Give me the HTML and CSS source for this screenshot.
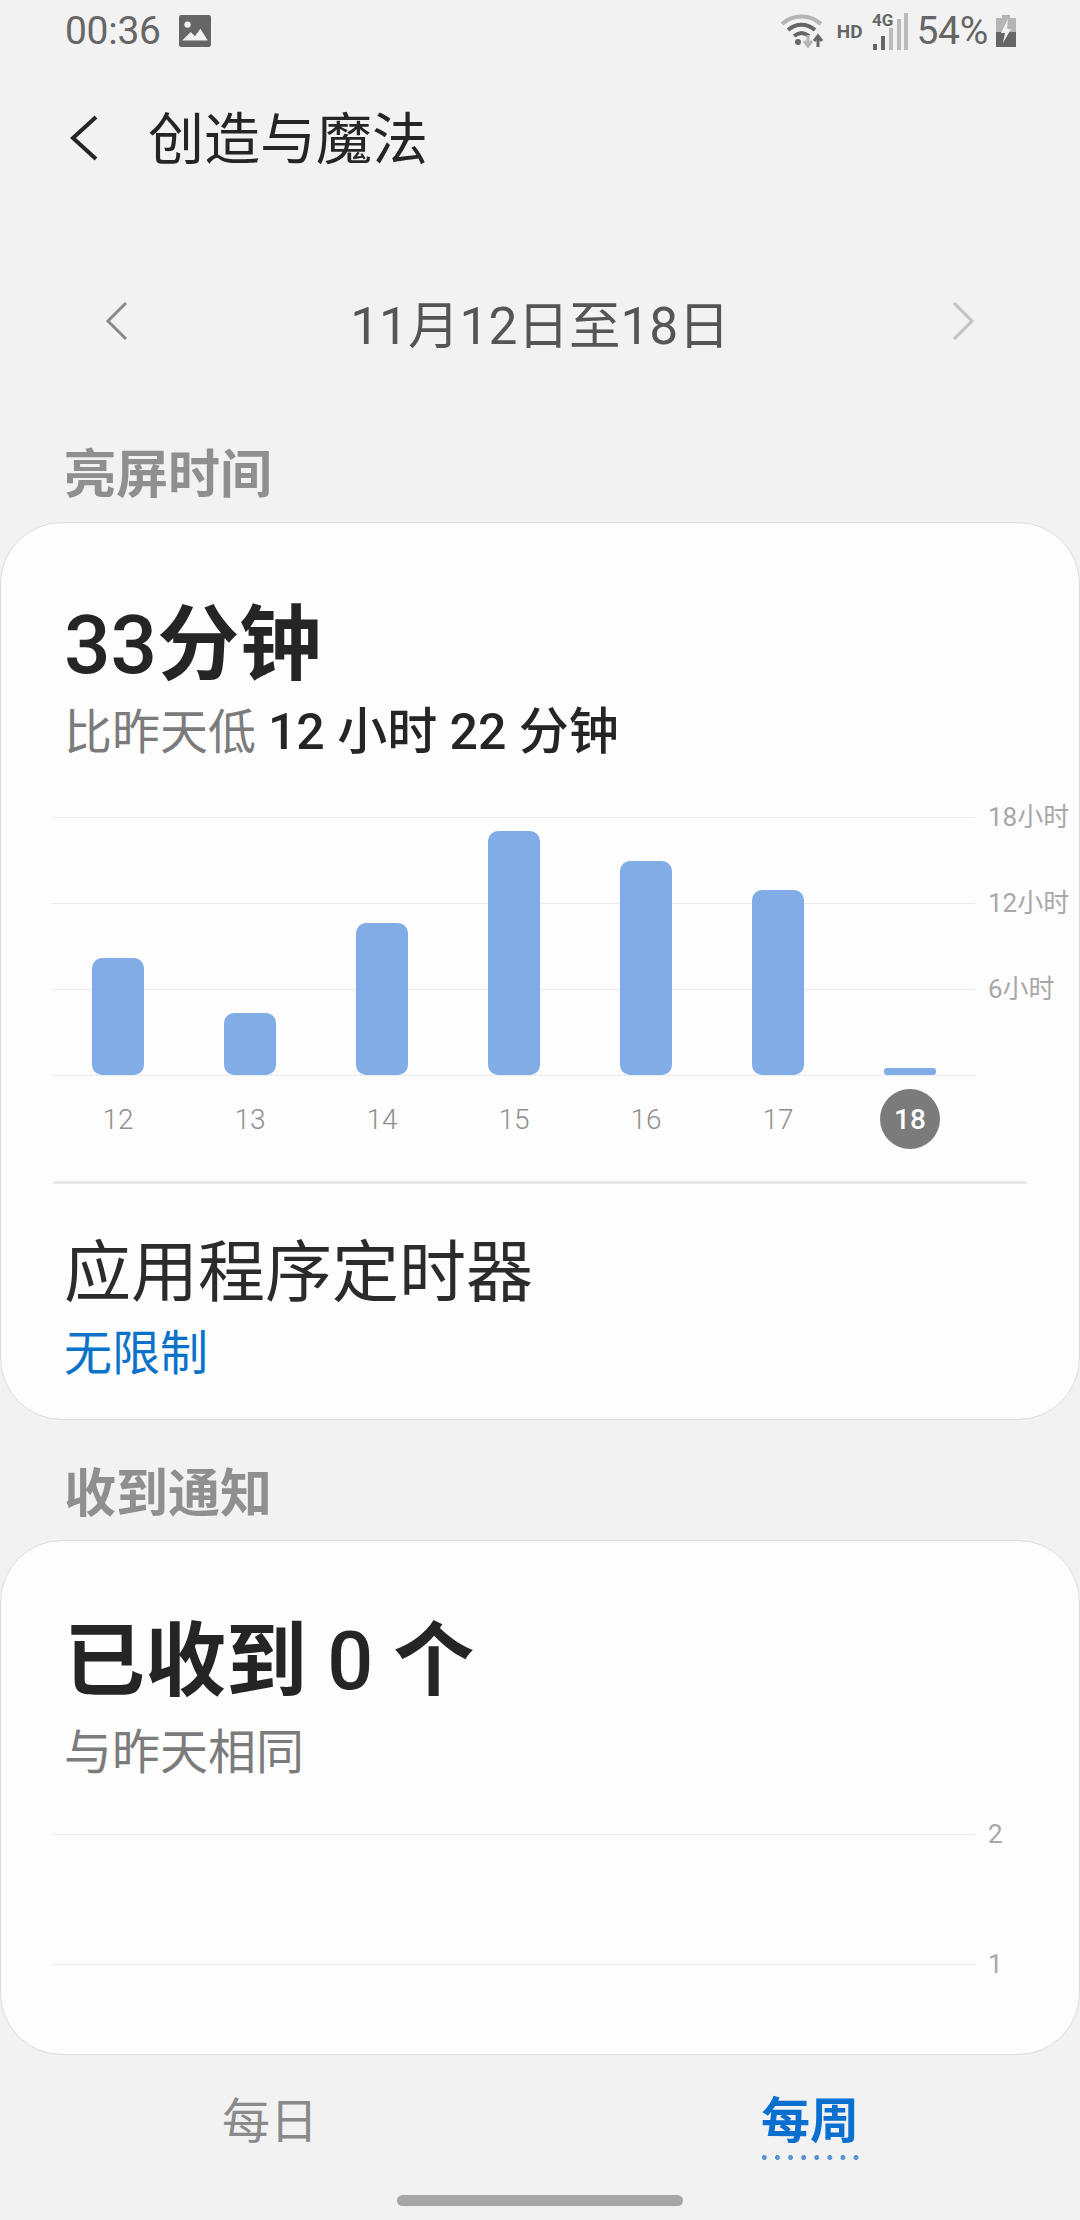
FILE: index.html
```html
<!DOCTYPE html>
<html lang="zh">
<head>
<meta charset="utf-8">
<title>创造与魔法</title>
<link rel="stylesheet" href="styles.css">
</head>
<body>
<div class="status">
  <div class="status-left">
    <span class="clock">00:36</span>
    <svg class="pic" viewBox="0 0 30 30"><path fill="#666" d="M0 2a2 2 0 0 1 2-2h26a2 2 0 0 1 2 2v26a2 2 0 0 1-2 2H2a2 2 0 0 1-2-2z"/><circle cx="8" cy="9" r="3" fill="#f2f2f2"/><path fill="#f2f2f2" d="M3 24l8-8 4 4 5-7 7 11z"/></svg>
  </div>
  <div class="status-right">
    <svg class="wifi" viewBox="0 0 44 36" fill="none"><path d="M2 11C13 1 30 1 41 11" stroke="#b5b5b5" stroke-width="4"/><path d="M8 17c8-7 19-7 27 0" stroke="#666" stroke-width="4"/><path d="M14 23c5-4 10-4 15 0" stroke="#666" stroke-width="4"/><circle cx="18" cy="29" r="3" fill="#666"/><path d="M28 22v10m-4-4 4 5 4-5" stroke="#b5b5b5" stroke-width="3"/><path d="M38 34V24m-4 4 4-5 4 5" stroke="#666" stroke-width="3"/></svg>
    <span class="hd">HD</span>
    <svg class="signal" viewBox="0 0 36 40"><text x="0" y="15" class="sig-text">4G</text><rect x="1" y="33" width="4" height="6" fill="#666"/><rect x="9" y="25" width="4" height="14" fill="#666"/><rect x="17" y="17" width="4" height="22" fill="#bbb"/><rect x="25" y="8" width="4" height="31" fill="#bbb"/><rect x="32" y="2" width="4" height="37" fill="#bbb"/></svg>
    <span class="pct">54%</span>
    <svg class="batt" viewBox="0 0 22 32"><path fill="#b5b5b5" d="M7 0h8v3h6v14H1V3h6z"/><path fill="#666" d="M1 17h20v15H1z"/><path fill="#f2f2f2" d="M13 4 6 18h4l-2 10 8-14h-4z"/></svg>
  </div>
</div>

<header class="header">
  <svg class="back" viewBox="0 0 32 48" fill="none"><path d="M28 3 5 24l23 21" stroke="#252525" stroke-width="4"/></svg>
  <h1 class="title">创造与魔法</h1>
</header>

<div class="date-row">
  <svg class="chev" viewBox="0 0 24 40" fill="none"><path d="M21 2 3 20l18 18" stroke="#8a8a8a" stroke-width="3"/></svg>
  <span class="date">11月12日至18日</span>
  <svg class="chev" viewBox="0 0 24 40" fill="none"><path d="M3 2l18 18L3 38" stroke="#c2c2c2" stroke-width="3"/></svg>
</div>

<h2 class="section section-first">亮屏时间</h2>
<section class="card card-screen">
  <div class="big big-time"><span class="num">33</span>分钟</div>
  <div class="sub">比昨天低 <b>12 小时 22 分钟</b></div>
  <div class="chart">
    <div class="grid-row"><i class="line"></i><span class="axis">18小时</span></div>
    <div class="grid-row"><i class="line"></i><span class="axis">12小时</span></div>
    <div class="grid-row"><i class="line"></i><span class="axis">6小时</span></div>
    <div class="grid-row"><i class="line"></i></div>
    <div class="bars">
      <i class="bar" style="height:117px"></i>
      <i class="bar" style="height:62px"></i>
      <i class="bar" style="height:152px"></i>
      <i class="bar" style="height:244px"></i>
      <i class="bar" style="height:214px"></i>
      <i class="bar" style="height:185px"></i>
      <i class="bar bar-min" style="height:7px"></i>
    </div>
  </div>
  <div class="days">
    <span>12</span><span>13</span><span>14</span><span>15</span><span>16</span><span>17</span><span class="today">18</span>
  </div>
  <div class="divider"></div>
  <div class="timer-title">应用程序定时器</div>
  <div class="timer-value">无限制</div>
</section>

<h2 class="section section-second">收到通知</h2>
<section class="card card-notif">
  <div class="big big-notif">已收到 <span class="num">0</span> 个</div>
  <div class="sub">与昨天相同</div>
  <div class="chart chart-notif">
    <div class="grid-row grid-row-tall"><i class="line"></i><span class="axis">2</span></div>
    <div class="grid-row grid-row-tall"><i class="line"></i><span class="axis">1</span></div>
  </div>
</section>

<nav class="tabs">
  <div class="tab">每日</div>
  <div class="tab tab-active">每周</div>
</nav>
<div class="home-wrap"><div class="home"></div></div>
</body>
</html>
```
FILE: styles.css
```css
* { box-sizing: border-box; }
html, body { margin: 0; padding: 0; }
body {
  width: 1080px;
  height: 2220px;
  overflow: hidden;
  background: #f2f2f2;
  color: #252525;
  font-family: Roboto, "Noto Sans CJK SC", sans-serif;
}
h1, h2 { margin: 0; font: inherit; }

.status {
  height: 60px;
  padding: 2px 63px 0 65px;
  display: flex;
  align-items: center;
  justify-content: space-between;
  color: #666;
}
.status-left { display: flex; align-items: center; gap: 18px; }
.clock { font-size: 39px; font-weight: 400; letter-spacing: -0.3px; }
.pic { width: 32px; height: 32px; }
.status-right { display: flex; align-items: center; }
.wifi { width: 44px; height: 36px; margin-right: 13px; }
.hd { font-size: 19px; font-weight: 700; margin-right: 10px; }
.signal { width: 36px; height: 40px; margin-right: 8px; }
.sig-text { font: 700 17px Roboto, sans-serif; fill: #666; }
.pct { font-size: 39px; font-weight: 400; letter-spacing: -0.3px; margin-right: 7px; }
.batt { width: 22px; height: 32px; }

.header {
  height: 156px;
  padding-left: 68px;
  display: flex;
  align-items: center;
}
.back { width: 32px; height: 48px; }
.title { margin: 4px 0 0 48px; font-size: 56px; font-weight: 400; line-height: 1; }

.date-row {
  height: 216px;
  padding: 0 105px 6px;
  display: flex;
  align-items: center;
  justify-content: space-between;
}
.chev { width: 24px; height: 40px; }
.date { font-size: 51.5px; color: #555; }

.section {
  padding-left: 64px;
  display: flex;
  align-items: center;
  font-size: 52px;
  font-weight: 700;
  color: #8f8f8f;
}
.section-first { height: 90px; padding-bottom: 14px; }
.section-second { height: 120px; padding-top: 18px; }

.card {
  background: #fdfdfd;
  border: 1px solid #dcdcdc;
  border-radius: 62px;
  overflow: hidden;
}
.card-screen { height: 898px; }
.card-notif { height: 515px; }

.big { margin-left: 63px; font-weight: 700; line-height: 1; }
.num { font-weight: 500; }
.big-time { font-size: 82px; padding-top: 81px; height: 183px; }
.big-notif { font-size: 81px; padding-top: 80px; height: 186px; }
.sub { margin-left: 63px; height: 52px; font-size: 48px; line-height: 52px; color: #7b7b7b; }
.sub b { color: #252525; font-weight: 500; font-size: 50px; }

.chart { position: relative; margin: 16px 0 0 51px; width: 1028px; }
.grid-row { height: 86px; display: flex; align-items: center; }
.line { display: block; width: 923px; height: 1px; background: #ececec; }
.axis { margin-left: 13px; font-size: 26px; color: #a8a8a8; line-height: 1; }
.bars {
  position: absolute;
  left: 40px;
  bottom: 43px;
  display: flex;
  align-items: flex-end;
  gap: 80px;
}
.bar { display: block; width: 52px; background: #82ace6; border-radius: 10px; }
.bar-min { border-radius: 3px; }

.days {
  margin: -29px 0 0 51px;
  width: 924px;
  height: 60px;
  display: grid;
  grid-template-columns: repeat(7, 132px);
  align-items: center;
  justify-items: center;
  font-size: 28px;
  font-weight: 300;
  color: #8f8f8f;
}
.today {
  width: 60px;
  height: 60px;
  border-radius: 50%;
  background: #7b7b7b;
  color: #fff;
  font-weight: 500;
  display: flex;
  align-items: center;
  justify-content: center;
}
.divider { margin: 32px 0 0 52px; width: 974px; height: 3px; background: #e8e8e8; }
.timer-title { margin: 44px 0 0 63px; font-size: 67px; line-height: 90px; color: #2b2b2b; }
.timer-value { margin: 3px 0 0 63px; font-size: 48px; line-height: 66px; color: #0b72c9; }

.chart-notif { margin-top: -10px; }
.grid-row-tall { height: 130px; }

.tabs {
  height: 120px;
  padding-top: 25px;
  display: flex;
}
.tab {
  width: 540px;
  display: flex;
  justify-content: center;
  font-size: 48px;
  line-height: 84px;
  color: #8a8a8a;
}
.tab-active {
  color: #0b6fd0;
  font-size: 49px;
  font-weight: 700;
  position: relative;
}
.tab-active::after {
  content: "";
  position: absolute;
  left: 222px;
  top: 75px;
  width: 97px;
  height: 5px;
  background: radial-gradient(circle at 2.5px 2.5px, #5b93d9 2.4px, transparent 2.6px) 0 0 / 13.1px 5px repeat-x;
}
.home-wrap { display: flex; justify-content: center; padding-top: 20px; }
.home { width: 286px; height: 11px; border-radius: 6px; background: #a6a6a6; }
```
